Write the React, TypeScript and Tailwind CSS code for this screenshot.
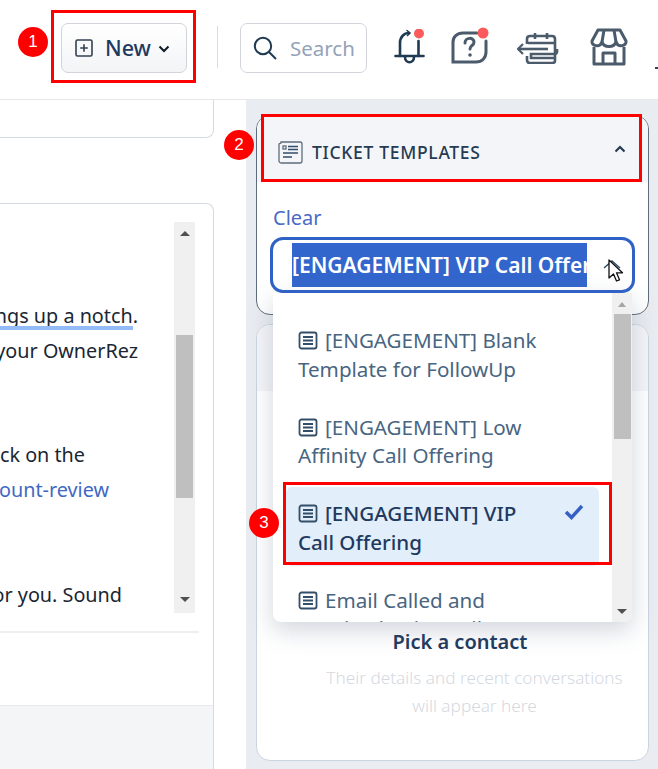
const DocIcon = () => (
  <svg width="20" height="19" viewBox="0 0 20 19" fill="none" stroke="#334e68" strokeWidth="1.8" className="inline-block mr-[7px] align-[-2px]">
    <rect x="1.5" y="1.5" width="17" height="16" rx="2" />
    <path d="M5 6h10M5 9.5h10M5 13h10" />
  </svg>
);

const Badge = ({ n, className }: { n: number; className: string }) => (
  <div className={`absolute w-[30px] h-[30px] rounded-full bg-[#ff0000] text-white text-[17px] flex items-center justify-center font-['Liberation_Sans',sans-serif] ${className}`}>
    {n}
  </div>
);

const Line = ({ text, className }: { text: string; className: string }) => (
  <div className={`flex justify-end overflow-hidden whitespace-nowrap h-[34.5px] leading-[34.5px] ${className}`}>
    <span className="shrink-0">{text}</span>
  </div>
);

const items = [
  { label: "[ENGAGEMENT] Blank Template for FollowUp" },
  { label: "[ENGAGEMENT] Low Affinity Call Offering" },
  { label: "[ENGAGEMENT] VIP Call Offering", selected: true },
  { label: "Email Called and Received Voicemail" },
];

const Header = () => (
  <header className="h-[100px] border-b border-[#e5e7eb] flex items-start pt-[23px] pl-[61px] shrink-0">
    <button className="w-[126px] h-[50px] rounded-[7px] border border-[#d1d5db] bg-gradient-to-b from-white to-[#f3f4f6] flex items-center pl-[13px]">
      <svg width="18" height="18" viewBox="0 0 18 18" fill="none" stroke="#334155" strokeWidth="1.6">
        <rect x="1" y="1" width="16" height="16" rx="1.5" />
        <path d="M9 5.2v7.6M5.2 9h7.6" />
      </svg>
      <span className="ml-[12px] text-[21.5px] font-medium text-[#1e3a5f]">New</span>
      <svg width="12" height="8" viewBox="0 0 12 8" fill="none" stroke="#111827" strokeWidth="2" className="ml-[7px] mt-[2px]">
        <path d="M1.5 1.5 6 6l4.5-4.5" />
      </svg>
    </button>
    <div className="w-px h-[42px] bg-[#d8dde3] ml-[30px] mt-[3px]" />
    <div className="w-[127px] h-[50px] ml-[22px] rounded-[7px] border border-[#d1d5db] flex items-center pl-[12px]">
      <svg width="25" height="25" viewBox="0 0 25 25" fill="none" stroke="#1f3a52" strokeWidth="2">
        <circle cx="10" cy="10" r="8.2" />
        <path d="M16 16l7 7" />
      </svg>
      <span className="ml-[12px] mt-[1px] text-[20.5px] text-[#94a3b8]">Search</span>
    </div>
    <svg width="34" height="36" viewBox="0 0 34 36" fill="none" stroke="#1f3a52" strokeWidth="2.6" strokeLinecap="round" className="ml-[27px] mt-[6px]">
      <path d="M6 27V14C6 8 10 4 15 4" />
      <path d="M24.500 12v15" />
      <path d="M1.500 27h28" />
      <path d="M11 28c0 7 9 7 9 0" />
      <path d="M13 1.500 16 4l-2.500 2.500" strokeWidth="1.500" />
      <circle cx="25" cy="4.500" r="5" fill="#fb5b5b" stroke="none" />
    </svg>
    <svg width="40" height="38" viewBox="0 0 40 38" fill="none" stroke="#4b5b6b" strokeWidth="3" strokeLinecap="round" className="ml-[23px] mt-[4px]">
      <path d="M26 6H12C6 6 2 10 2 15v20c9 0 16 0 23 0 6 0 10-4 10-10V14" />
      <path d="M14 16c0-6 9-6 9-1 0 4-4 3-4 7" />
      <circle cx="19" cy="28" r="1.800" fill="#4b5b6b" stroke="none" />
      <circle cx="32" cy="6" r="5.500" fill="#fb5b5b" stroke="none" />
    </svg>
    <svg width="43" height="32" viewBox="0 0 43 32" fill="none" stroke="#4b5b6b" strokeWidth="2.6" className="ml-[26px] mt-[9px]">
      <path d="M10 12V7c0-2 1-3 3-3h22c2 0 3 1 3 3v22c0 1-1 2-3 2H13c-2 0-3-1-3-3v-4" />
      <path d="M18 1v6M30 1v6M11 11h27" />
      <path d="M1 17h30" />
      <path d="M6 12l-5 5 5 5" strokeWidth="2.200" />
      <path d="M40 17v3c0 1-1 2-2 2H14v4h24" />
    </svg>
    <svg width="40" height="38" viewBox="0 0 40 38" fill="none" stroke="#4b5b6b" strokeWidth="3" strokeLinejoin="round" className="ml-[29px] mt-[5px]">
      <path d="M9 2h22l6 11c1 5-8 7-10 1-2 6-12 6-14 0-2 6-11 4-10-1z" />
      <path d="M15 2l-2 12M25 2l2 12" />
      <path d="M5 19v17h30V19" />
      <path d="M14 36V25h12v11" />
    </svg>
  </header>
);

const LeftPane = () => (
  <div className="w-[246px] shrink-0 bg-white">
    <div className="w-[214px] h-[38px] border-r border-b border-[#d5dae1] rounded-br-[8px]" />
    <div className="w-[214px] mt-[65px] h-[566px] border-t border-r border-[#d5dae1] rounded-tr-[8px] flex flex-col">
      <div className="flex h-[391px] mt-[18px] shrink-0">
        <div className="w-[174px] text-[19.8px] text-[#1a2633] pt-[77px]">
          <div className="relative">
            <Line text="Let's kick things up a notch." className="w-[138px]" />
            <div className="absolute left-0 top-[27px] w-[133px] h-[4px] bg-[#93bbf7]" />
          </div>
          <Line text="Thank you for being your OwnerRez" className="w-[138px]" />
          <Line text="Please click on the" className="w-[85px] mt-[70px]" />
          <Line text="ownerrez.com/account-review" className="w-[109px] text-[#3f68c4]" />
          <Line text="We will do it for you. Sound" className="w-[122px] mt-[71px]" />
        </div>
        <div className="w-[21px] bg-[#f0f0f0] flex flex-col items-center">
          <div className="w-0 h-0 mt-[9px] border-x-[5px] border-x-transparent border-b-[5px] border-b-[#505050]" />
          <div className="w-[17px] h-[163px] bg-[#bfbfbf] mt-[99px]" />
          <div className="w-0 h-0 mt-[99px] border-x-[5px] border-x-transparent border-t-[5px] border-t-[#505050]" />
        </div>
      </div>
      <div className="w-[199px] h-[2px] bg-[#eceef2] mt-[18px] shrink-0" />
      <div className="h-[72px] shrink-0" />
      <div className="flex-1 bg-[#f4f5f7] border-t border-[#e8eaee]" />
    </div>
  </div>
);

const RightPane = () => (
  <div className="flex-1 bg-[#e9ecf1] pl-[10px] pr-[9px] pt-[15px] pb-[8px] flex flex-col gap-[9px]">
    <div className="h-[200px] shrink-0 rounded-[14px] border border-[#5f6c7b] bg-white overflow-hidden">
      <div className="h-[66px] bg-[#f4f5f8] flex items-center pl-[21px] pr-[22px]">
        <svg width="25" height="25" viewBox="0 0 25 25" fill="none" stroke="#5f6c7b" strokeWidth="1.300" className="mt-[5px]">
          <path d="M3 4V3h19c1 0 2 1 2 2v17c0 1-1 2-2 2H3c-1 0-2-1-2-2V5z" />
          <rect x="5" y="7" width="3" height="3" />
          <path d="M10 7.500h10M10 10.500h10M5 14h15M5 18h9" stroke="#334e68" />
        </svg>
        <span className="ml-[9px] mt-[7px] text-[17.5px] font-medium tracking-[0.7px] text-[#243b53]">TICKET TEMPLATES</span>
        <svg width="12" height="8" viewBox="0 0 12 8" fill="none" stroke="#243b53" strokeWidth="2.200" className="ml-auto">
          <path d="M1.500 6.500 6 2l4.500 4.500" />
        </svg>
      </div>
      <div className="pl-[13px] pr-[13px] pt-[22px]">
        <div className="pl-[3px] text-[20px] leading-[28px] text-[#4a6ac6]">Clear</div>
        <div className="h-[56px] mt-[5px] rounded-[13px] border-[3px] border-[#2f62c7] bg-white flex items-center pl-[19px]">
          <span className="w-[295px] h-[44px] leading-[44px] bg-[#3366cc] text-white text-[21px] font-semibold whitespace-nowrap overflow-hidden">
            [ENGAGEMENT] VIP Call Offering
          </span>
        </div>
      </div>
    </div>
    <div className="flex-1 rounded-[14px] border border-[#cbd5e1] bg-white overflow-hidden flex flex-col items-center">
      <div className="h-[66px] w-full bg-[#f4f5f8] shrink-0" />
      <div className="mt-[237px] w-full text-center text-[20px] leading-[28px] font-semibold text-[#1e3a5f] pl-[15px]">Pick a contact</div>
      <div className="mt-[8px] w-[310px] ml-[44px] text-center text-[17.2px] leading-[28px] font-light text-[#d5d9df]">
        Their details and recent conversations will appear here
      </div>
    </div>
  </div>
);

const Dropdown = () => (
  <div className="absolute left-[273px] top-[293px] w-[359px] h-[329px] bg-white rounded-b-[8px] overflow-hidden shadow-[0_8px_24px_rgba(100,116,139,0.3)] flex">
    <div className="flex-1 pl-[13px] pr-[13px] pt-[21px] flex flex-col gap-[8px] text-[20.6px] leading-[28.5px]">
      {items.map((item) => (
        <div
          key={item.label}
          className={`shrink-0 h-[78.500px] rounded-[6px] pl-[12px] pt-[12px] relative ${item.selected ? "bg-[#e3eefb] font-medium text-[#1e3a5f]" : "text-[#486581]"}`}
        >
          <div className="pr-[50px]">
            <DocIcon />
            {item.label}
          </div>
          {item.selected && (
            <svg width="20" height="16" viewBox="0 0 20 16" fill="none" stroke="#3561c4" strokeWidth="3.500" className="absolute right-[15px] top-[17px]">
              <path d="M2 8l5.500 5.500L18 2" />
            </svg>
          )}
        </div>
      ))}
    </div>
    <div className="w-[20px] bg-[#f0f0f0] flex flex-col items-center shrink-0">
      <div className="w-0 h-0 mt-[9px] border-x-[4px] border-x-transparent border-b-[5px] border-b-[#a6a6a6]" />
      <div className="w-[17px] h-[125px] bg-[#bfbfbf] mt-[7px]" />
      <div className="w-0 h-0 mt-auto mb-[8px] border-x-[5px] border-x-transparent border-t-[5px] border-t-[#505050]" />
    </div>
  </div>
);

export default function App() {
  return (
    <div className="relative w-[658px] h-[769px] overflow-hidden bg-white flex flex-col font-['Noto_Sans',sans-serif]">
      <Header />
      <div className="flex flex-1 min-h-0">
        <LeftPane />
        <RightPane />
      </div>

      <Dropdown />

      {/* chevron of the select and the mouse pointer */}
      <svg width="30" height="32" viewBox="0 0 30 32" fill="none" className="absolute left-[599px] top-[254px]">
        <path d="M5 14l8-7 8 7" stroke="#334e68" strokeWidth="1.500" />
        <path d="M10 6v18l4.500-4 3 7 3-1.200-3-7h6z" fill="#fff" stroke="#111" strokeWidth="1.300" strokeLinejoin="round" />
      </svg>

      {/* tiny mark at the right edge of the header */}
      <div className="absolute left-[655px] top-[67px] w-[3px] h-[2px] bg-[#374151]" />

      {/* red annotations */}
      <div className="absolute left-[51px] top-[10px] w-[145px] h-[73px] border-[3px] border-[#ff0000]" />
      <div className="absolute left-[261px] top-[114px] w-[381px] h-[68px] border-[3px] border-[#ff0000]" />
      <div className="absolute left-[283px] top-[482px] w-[329px] h-[83px] border-[3px] border-[#ff0000]" />
      <Badge n={1} className="left-[18px] top-[27px]" />
      <Badge n={2} className="left-[224px] top-[130px]" />
      <Badge n={3} className="left-[249px] top-[508px]" />
    </div>
  );
}
